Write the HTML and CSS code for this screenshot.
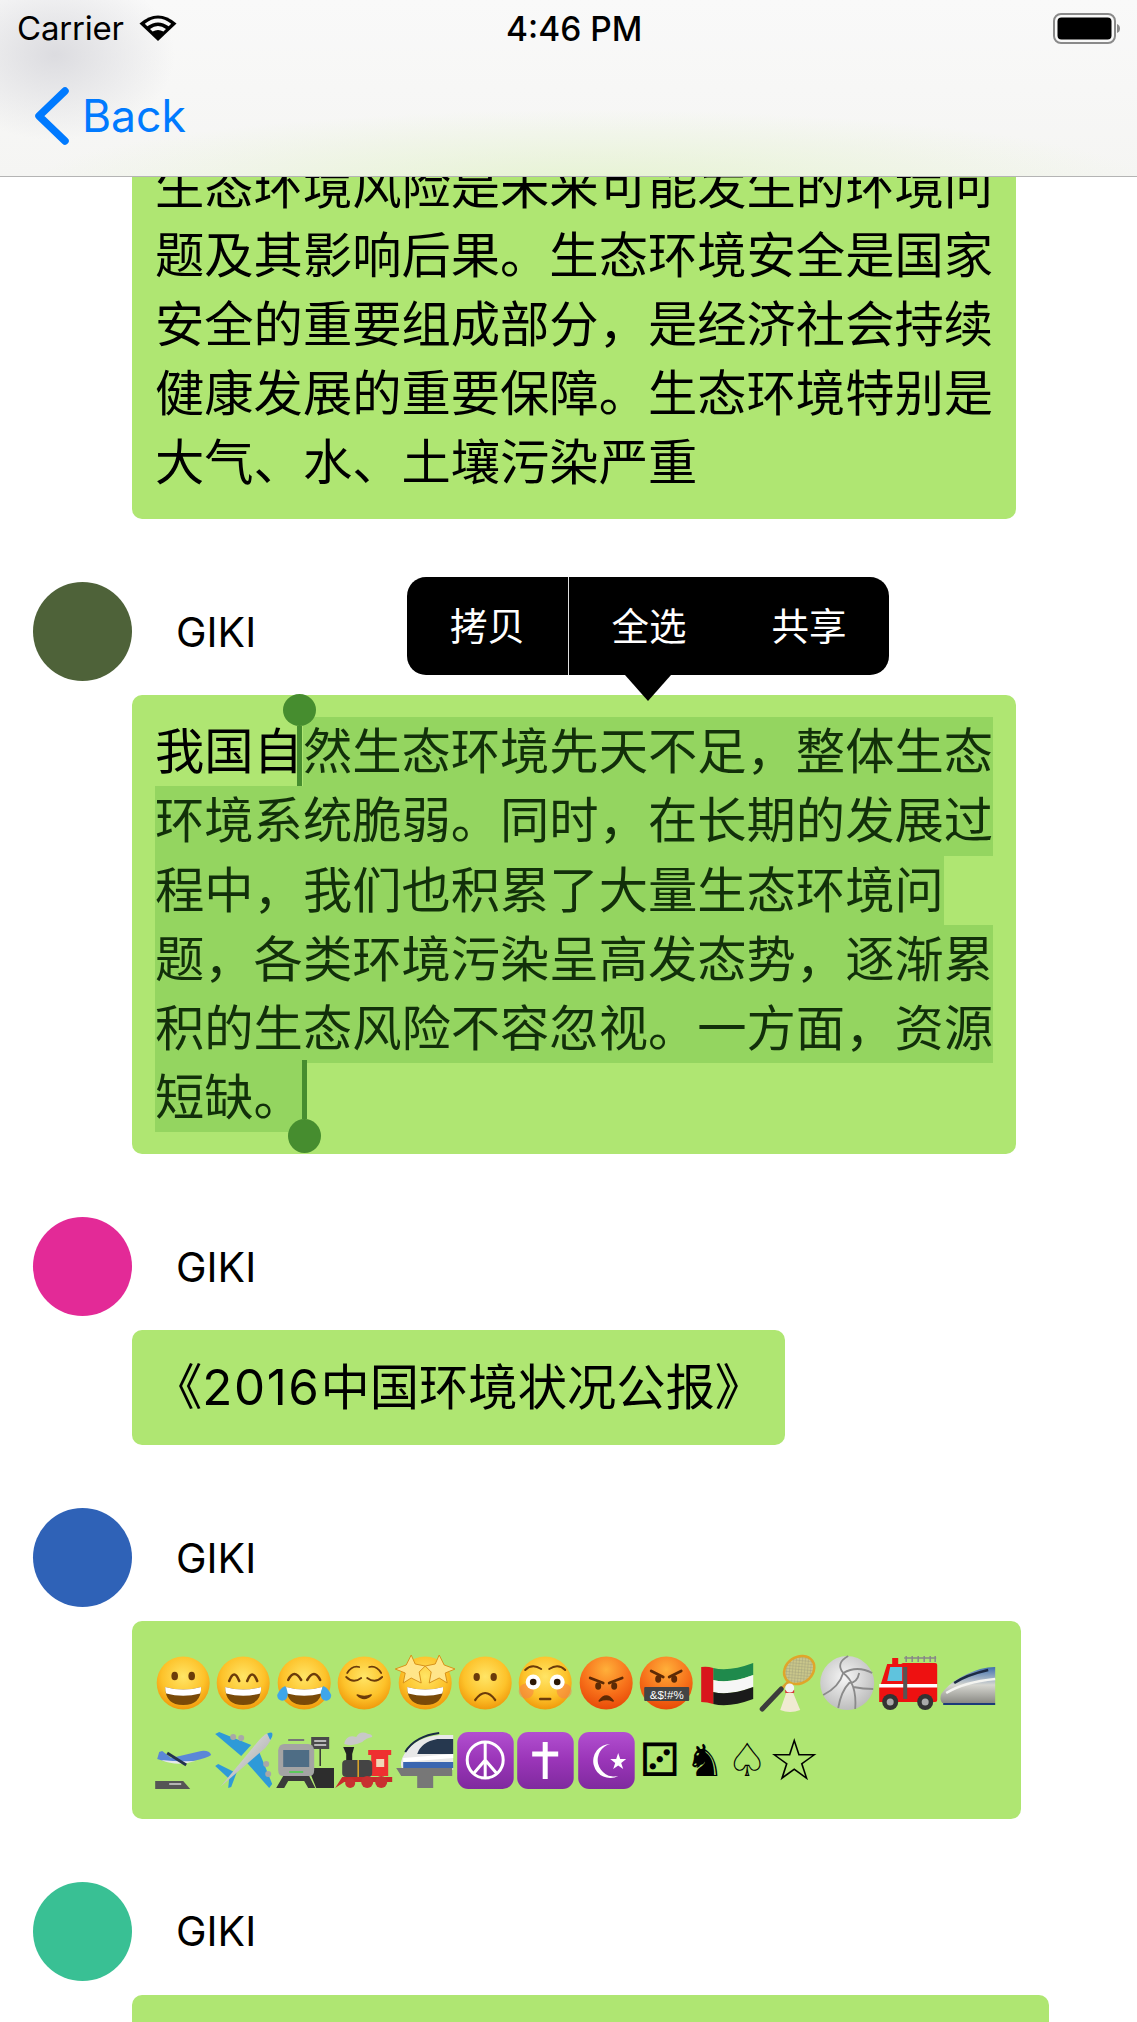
FILE: index.html
```html
<!DOCTYPE html>
<html lang="zh">
<head>
<meta charset="utf-8">
<title>Chat</title>
<link rel="stylesheet" href="styles.css">
</head>
<body>
<svg class="defs" aria-hidden="true">
  <defs>
    <radialGradient id="fy" cx="50%" cy="38%" r="62%"><stop offset="0" stop-color="#ffe566"/><stop offset=".65" stop-color="#fdc22a"/><stop offset="1" stop-color="#f09a0c"/></radialGradient>
    <radialGradient id="fo" cx="50%" cy="25%" r="75%"><stop offset="0" stop-color="#ffb03a"/><stop offset=".6" stop-color="#f7701a"/><stop offset="1" stop-color="#e84a08"/></radialGradient>
    <radialGradient id="vb" cx="45%" cy="40%" r="65%"><stop offset="0" stop-color="#f6f6f6"/><stop offset="1" stop-color="#b9b9b9"/></radialGradient>
    <linearGradient id="pu" x1="0" y1="0" x2="0" y2="1"><stop offset="0" stop-color="#b24fd0"/><stop offset=".5" stop-color="#9a35b8"/><stop offset="1" stop-color="#7f2a9e"/></linearGradient>
    <linearGradient id="tr" x1="0" y1="0" x2="0" y2="1"><stop offset="0" stop-color="#3f6fae"/><stop offset=".5" stop-color="#d6d6d0"/><stop offset="1" stop-color="#8a8a85"/></linearGradient>
    <linearGradient id="pl" x1="0" y1="0" x2="1" y2="1"><stop offset="0" stop-color="#f2f2f2"/><stop offset="1" stop-color="#9c9c9c"/></linearGradient>
    <pattern id="mesh" width="3" height="3" patternUnits="userSpaceOnUse" patternTransform="rotate(40)"><rect width="3" height="3" fill="#c9c68a"/><path d="M0 0H3M0 0V3" stroke="#9c9a78" stroke-width=".8"/></pattern>
    <symbol id="grin-mouth" viewBox="0 0 60 60"><path d="M12 34Q30 39 48 34Q48 52 30 52Q12 52 12 34Z" fill="#7a4a08"/><path d="M12 34Q30 39 48 34Q48 38 47 40.500Q30 45 13 40.500Q12 38 12 34Z" fill="#fff"/></symbol>
  </defs>
</svg>

<main class="list">
  <section class="msg">
    <div class="who"><div class="avatar a0"></div><span class="name">GIKI</span></div>
    <div class="bubble w1">
      <div class="line">生态环境风险是未来可能发生的环境问</div>
      <div class="line">题及其影响后果。生态环境安全是国家</div>
      <div class="line">安全的重要组成部分，是经济社会持续</div>
      <div class="line">健康发展的重要保障。生态环境特别是</div>
      <div class="line">大气、水、土壤污染严重</div>
    </div>
  </section>

  <section class="msg">
    <div class="who"><div class="avatar a1"></div><span class="name">GIKI</span></div>
    <div class="bubble w1">
      <div class="line">我国自<span class="sel">然生态环境先天不足，整体生态</span></div>
      <div class="line"><span class="sel">环境系统脆弱。同时，在长期的发展过</span></div>
      <div class="line"><span class="sel">程中，我们也积累了大量生态环境问</span></div>
      <div class="line"><span class="sel">题，各类环境污染呈高发态势，逐渐累</span></div>
      <div class="line"><span class="sel">积的生态风险不容忽视。一方面，资源</span></div>
      <div class="line"><span class="sel">短缺。</span></div>
      <div class="handle start"><i class="knob"></i><i class="stem"></i></div>
      <div class="handle end"><i class="stem"></i><i class="knob"></i></div>
      <div class="menu"><span class="mi first">拷贝</span><span class="mi">全选</span><span class="mi">共享</span></div>
    </div>
  </section>

  <section class="msg">
    <div class="who"><div class="avatar a2"></div><span class="name">GIKI</span></div>
    <div class="bubble w3"><div class="line">《<span class="num">2016</span>中国环境状况公报》</div></div>
  </section>

  <section class="msg">
    <div class="who"><div class="avatar a3"></div><span class="name">GIKI</span></div>
    <div class="bubble w4">
      <div class="emrow">
        <!-- grinning -->
        <svg class="em" viewBox="0 0 60 60"><circle cx="30" cy="30" r="26.500" fill="url(#fy)"/><ellipse cx="21.500" cy="23" rx="3.300" ry="4.300" fill="#6b3b0a"/><ellipse cx="38.500" cy="23" rx="3.300" ry="4.300" fill="#6b3b0a"/><use href="#grin-mouth"/></svg>
        <!-- beaming -->
        <svg class="em" viewBox="0 0 60 60"><circle cx="30" cy="30" r="26.500" fill="url(#fy)"/><path d="M16 28Q21 15 26 28M34 28Q39 15 44 28" fill="none" stroke="#6b3b0a" stroke-width="2.500" stroke-linecap="round"/><use href="#grin-mouth"/></svg>
        <!-- tears of joy -->
        <svg class="em" viewBox="0 0 60 60"><circle cx="30" cy="30" r="26.500" fill="url(#fy)"/><path d="M14 27Q20 15 27 27M33 27Q40 15 46 27" fill="none" stroke="#6b3b0a" stroke-width="2.500" stroke-linecap="round"/><use href="#grin-mouth"/><path d="M3 42C5 37 8 34 11 33C13 37 15 42 12 46C9 49 3 48 3 42Z" fill="#3fa6ea"/><path d="M57 42C55 37 52 34 49 33C47 37 45 42 48 46C51 49 57 48 57 42Z" fill="#3fa6ea"/></svg>
        <!-- relieved -->
        <svg class="em" viewBox="0 0 60 60"><circle cx="30" cy="30" r="26.500" fill="url(#fy)"/><path d="M12 24Q19 31 27 25M33 25Q41 31 48 24M13 20Q18 12 25 14M35 14Q42 12 47 20" fill="none" stroke="#6b3b0a" stroke-width="1.800" stroke-linecap="round"/><path d="M23 42Q30 49 37 42Q30 45 23 42Z" fill="#6b3b0a" stroke="#6b3b0a" stroke-width="1.500" stroke-linejoin="round"/></svg>
        <!-- star struck -->
        <svg class="em" viewBox="0 0 60 60"><circle cx="30" cy="30" r="26.500" fill="url(#fy)"/><use href="#grin-mouth"/><path d="M16 2L20 11L30 13L24 19L26 30L16 25L8 30L10 20L0 16L11 12Z" fill="#ffe58a" stroke="#d8921a" stroke-width="1"/><path d="M44 2L49 12L60 16L50 20L52 30L44 25L34 30L36 19L30 13L40 11Z" fill="#ffe58a" stroke="#d8921a" stroke-width="1"/></svg>
        <!-- frowning -->
        <svg class="em" viewBox="0 0 60 60"><circle cx="30" cy="30" r="26.500" fill="url(#fy)"/><ellipse cx="21.500" cy="24" rx="3.200" ry="4" fill="#6b3b0a"/><ellipse cx="38.500" cy="24" rx="3.200" ry="4" fill="#6b3b0a"/><path d="M20 47Q30 33 40 47" fill="none" stroke="#6b3b0a" stroke-width="2.200" stroke-linecap="round"/></svg>
        <!-- flushed -->
        <svg class="em" viewBox="0 0 60 60"><circle cx="30" cy="30" r="26.500" fill="url(#fy)"/><circle cx="11" cy="38" r="7.500" fill="#f6824a" opacity=".55"/><circle cx="49" cy="38" r="7.500" fill="#f6824a" opacity=".55"/><circle cx="18" cy="29" r="7.500" fill="#fff"/><circle cx="42" cy="29" r="7.500" fill="#fff"/><circle cx="18" cy="29" r="3.300" fill="#2c1806"/><circle cx="42" cy="29" r="3.300" fill="#2c1806"/><path d="M10 17Q17 10 26 16M34 16Q43 10 50 17" fill="none" stroke="#6b3b0a" stroke-width="2" stroke-linecap="round"/><path d="M25 46H35" stroke="#6b3b0a" stroke-width="2.500" stroke-linecap="round"/></svg>
        <!-- angry -->
        <svg class="em" viewBox="0 0 60 60"><circle cx="30" cy="30" r="26.500" fill="url(#fo)"/><path d="M14 25L27 30M46 25L33 30" stroke="#5d2a05" stroke-width="2.800" stroke-linecap="round"/><ellipse cx="22" cy="33" rx="3" ry="3.800" fill="#5d2a05"/><ellipse cx="38" cy="33" rx="3" ry="3.800" fill="#5d2a05"/><path d="M23 48Q30 38 37 48Q30 45 23 48Z" fill="#5d2a05" stroke="#5d2a05" stroke-width="1.500" stroke-linejoin="round"/></svg>
        <!-- cursing -->
        <svg class="em" viewBox="0 0 60 60"><circle cx="30" cy="30" r="26.500" fill="url(#fo)"/><path d="M15 18L27 24M45 18L33 24" stroke="#5d2a05" stroke-width="2.800" stroke-linecap="round"/><ellipse cx="22" cy="26" rx="3" ry="3.800" fill="#5d2a05"/><ellipse cx="38" cy="26" rx="3" ry="3.800" fill="#5d2a05"/><rect x="8" y="34" width="45" height="14" rx="1" fill="#444"/><text class="curse" x="30.500" y="45.500" text-anchor="middle">&amp;$!#%</text></svg>
        <!-- UAE flag -->
        <svg class="em" viewBox="0 0 60 60"><path d="M16 15Q32 19 56 10V22Q32 31 16 27Z" fill="#1f8a4c"/><path d="M16 27Q32 31 56 22V34Q32 43 16 39Z" fill="#f6f6f6"/><path d="M16 39Q32 43 56 34V46Q32 55 16 51Z" fill="#1a1a1a"/><path d="M4 14Q10 13 16 15V51Q10 49 4 49Z" fill="#d9161c"/></svg>
        <!-- badminton -->
        <svg class="em" viewBox="0 0 60 60"><ellipse cx="42" cy="17" rx="16" ry="13" transform="rotate(-35 42 17)" fill="url(#mesh)" stroke="#e0a52a" stroke-width="2.500"/><path d="M31 29L24 36" stroke="#d8a030" stroke-width="3"/><path d="M24 36L5 56" stroke="#3c3c3c" stroke-width="5" stroke-linecap="round"/><path d="M23 57L29 40H36L43 57Q33 61 23 57Z" fill="#f0ead2"/><path d="M28 40H37V37H28Z" fill="#d83a3a"/><circle cx="32.500" cy="35" r="4.500" fill="#f2f2f2"/></svg>
        <!-- volleyball -->
        <svg class="em" viewBox="0 0 60 60"><circle cx="30" cy="30" r="27" fill="url(#vb)"/><g fill="none" stroke="#8a8a8a" stroke-width="1.800"><path d="M26 20Q18 10 31 3M26 20Q40 12 55 20M26 20Q22 34 6 42"/><path d="M26 20Q40 30 38 56M42 20Q40 30 32 30Q24 38 21 55M36 34Q46 36 56 36"/></g></svg>
        <!-- fire engine -->
        <svg class="em" viewBox="0 0 60 60"><path d="M26 5H58M28 3V9M34 3V9M40 3V9M46 3V9M52 3V9M57 3V9" stroke="#888" stroke-width="1.500" fill="none"/><rect x="23" y="10" width="36" height="39" rx="2" fill="#ee1111"/><path d="M3 30L9 11H25V49H1V35Z" fill="#ee1111"/><path d="M9 28L12 14H24V28Z" fill="#5fc3dd"/><rect x="14" y="5" width="6" height="6" fill="#e11"/><rect x="1" y="31" width="58" height="3.500" fill="#fff"/><rect x="25" y="14" width="4" height="32" fill="#555"/><circle cx="12" cy="49" r="8" fill="#333"/><circle cx="12" cy="49" r="3.500" fill="#aaa"/><circle cx="47" cy="49" r="8" fill="#333"/><circle cx="47" cy="49" r="3.500" fill="#aaa"/></svg>
        <!-- bullet train -->
        <svg class="em" viewBox="0 0 60 60"><path d="M57 14V50H4Q1 46 3 41Q14 25 42 16Q50 14 57 14Z" fill="url(#tr)"/><path d="M8 40Q26 29 57 26" stroke="#f4f4f0" stroke-width="2.500" fill="none"/><path d="M16 30Q28 22 50 17" stroke="#1c2a44" stroke-width="2.500" fill="none"/><rect x="5" y="50" width="52" height="2" fill="#1c3a7a"/></svg>
      </div>
      <div class="emrow">
        <!-- departure -->
        <svg class="em" viewBox="0 0 60 60"><path d="M4 29Q20 35 40 31Q54 28 58 25Q56 20 48 21L18 28L9 21L6 22Z" fill="#5b87d8"/><path d="M8 30Q24 37 42 31Q26 32 8 30Z" fill="#e8e8e8"/><path d="M14 23L33 35" stroke="#24324e" stroke-width="2.800"/><path d="M2 51H30L37 59H2Z" fill="#555"/><path d="M16 54H28" stroke="#ccc" stroke-width="1.600"/></svg>
        <!-- airplane -->
        <svg class="em" viewBox="0 0 60 60"><path d="M2 4L6 2L38 15L28 26Z" fill="#2e9ad8"/><path d="M56 58L59 54L46 22L33 32Z" fill="#2e9ad8"/><path d="M2 36L5 34L21 42L15 48Z" fill="#2e9ad8"/><path d="M15 58L18 57L24 41L16 48Z" fill="#2e9ad8"/><circle cx="20" cy="7" r="3" fill="#a8a8a8"/><circle cx="28" cy="8" r="3" fill="#a8a8a8"/><circle cx="53" cy="34" r="3" fill="#a8a8a8"/><circle cx="55" cy="44" r="3" fill="#a8a8a8"/><path d="M7 57L46 10Q54 1 59 3Q60 9 52 18Z" fill="url(#pl)"/><path d="M54 3.500Q58 2 59 3Q60 6 57 10Z" fill="#2e9ad8"/></svg>
        <!-- station -->
        <svg class="em" viewBox="0 0 60 60"><rect x="37" y="7" width="18" height="12" fill="#4a4a4a"/><path d="M40 11H52M40 15H52" stroke="#ddd" stroke-width="1.500"/><path d="M46 19V36" stroke="#333" stroke-width="1.500"/><path d="M34 38H60V58H42Z" fill="#2d2d2d"/><path d="M10 14H34Q39 14 40 20V40Q40 46 35 46H9Q4 46 4 40V20Q5 14 10 14Z" fill="#a4a4a4"/><path d="M14 10H30" stroke="#777" stroke-width="2"/><rect x="9" y="20" width="26" height="17" fill="#4e6d85"/><rect x="15" y="41" width="14" height="2" fill="#5cc85c"/><path d="M2 58L9 46H35L41 58H34L30 51H14L10 58Z" fill="#3a3a3a"/></svg>
        <!-- locomotive -->
        <svg class="em" viewBox="0 0 60 60"><path d="M10 14Q12 4 22 7Q26 0 34 4Q38 4 38 7Q32 8 28 12Q18 17 10 14Z" fill="#c8c8c8"/><path d="M9 17H20L18 24V31H12V24Z" fill="#222"/><rect x="34" y="20" width="23" height="5" fill="#ee3030"/><rect x="37" y="25" width="17" height="21" fill="#ee3030"/><rect x="42" y="29" width="8" height="8" fill="#f0d8b8"/><rect x="8" y="30" width="30" height="17" rx="4" fill="#444"/><path d="M24 30V47" stroke="#e0a82a" stroke-width="1.500"/><path d="M1 58L8 47H58V52H10Z" fill="#c82a2a"/><circle cx="16" cy="53" r="5" fill="#c83030"/><circle cx="33" cy="52" r="6" fill="#c83030"/><circle cx="47" cy="52" r="6" fill="#c83030"/></svg>
        <!-- monorail -->
        <svg class="em" viewBox="0 0 60 60"><path d="M58 5V40H8Q4 36 7 28Q16 8 44 5Z" fill="#e8e8e8"/><path d="M22 24Q26 12 42 9H58V24Z" fill="#26384f"/><path d="M8 28L58 24V28L8 32Z" fill="#fff"/><path d="M8 32H58V38H8Z" fill="#3a66b0"/><path d="M10 22Q20 6 44 3" stroke="#1a2a44" stroke-width="2" fill="none"/><path d="M1 38H57V46H38V58H22V46H6Z" fill="#777"/></svg>
        <!-- peace -->
        <svg class="em" viewBox="0 0 60 60"><rect x="2" y="2" width="56.500" height="57" rx="11" fill="url(#pu)"/><g fill="none" stroke="#fff" stroke-width="3"><circle cx="30" cy="30" r="18"/><path d="M30 12V48M30 30L18 44M30 30L42 44"/></g></svg>
        <!-- cross -->
        <svg class="em" viewBox="0 0 60 60"><rect x="2" y="2" width="56.500" height="57" rx="11" fill="url(#pu)"/><path d="M30 12V49M17 24H43" stroke="#fff" stroke-width="5"/></svg>
        <!-- crescent -->
        <svg class="em" viewBox="0 0 60 60"><rect x="2" y="2" width="56.500" height="57" rx="11" fill="url(#pu)"/><path d="M34 14A17 17 0 1 0 42 46A15 15 0 1 1 34 14Z" fill="#fff"/><path d="M42 23L44 29L50 29L45 33L47 39L42 35.500L37 39L39 33L34 29L40 29Z" fill="#fff"/></svg>
        <span class="gl g1">⚂</span><span class="gl g2">♞</span><span class="gl g3">♤</span><span class="gl g4">☆</span>
      </div>
    </div>
  </section>

  <section class="msg">
    <div class="who"><div class="avatar a4"></div><span class="name">GIKI</span></div>
    <div class="bubble w5"><div class="line">&nbsp;</div></div>
  </section>
</main>

<header class="nav">
  <div class="status">
    <div class="carrier"><span>Carrier</span>
      <svg class="wifi" viewBox="0 0 38 28"><path d="M19 27L0.500 9.500Q19 -6.500 37.500 9.500Z" fill="#000"/><path d="M5.800 9.800Q19 -1 32.200 9.800L29.700 12.300Q19 4.500 8.300 12.300Z" fill="#f7f7f7"/><path d="M11 15Q19 8.800 27 15L24.400 17.600Q19 14.500 13.600 17.600Z" fill="#f7f7f7"/></svg>
    </div>
    <span class="time">4:46 PM</span>
    <svg class="battery" viewBox="0 0 67 31"><rect x="1" y="1" width="61" height="29" rx="7" fill="none" stroke="#8a8a8a" stroke-width="2"/><rect x="4.500" y="4.500" width="54" height="22" rx="4" fill="#000"/><path d="M64 11Q67 12 67 15.500Q67 19 64 20Z" fill="#8a8a8a"/></svg>
  </div>
  <a class="back"><svg class="chev" viewBox="0 0 36 58"><path d="M31 4L5 29L31 54" fill="none" stroke="#007aff" stroke-width="7.500" stroke-linecap="round" stroke-linejoin="round"/></svg><span>Back</span></a>
</header>
</body>
</html>
```
FILE: styles.css
```css
* { box-sizing: border-box; }
html, body { margin: 0; padding: 0; background: #fff; }
body {
  width: 1137px;
  height: 2022px;
  overflow: hidden;
  position: relative;
  font-family: Inter, "Noto Sans CJK SC", sans-serif;
  color: #000;
}
.defs { position: absolute; width: 0; height: 0; }

.list { padding-top: 16.500px; display: flex; flex-direction: column; gap: 63px; }
.msg { display: flex; flex-direction: column; gap: 14px; padding-left: 33px; }
.who { display: flex; align-items: center; gap: 44px; }
.avatar { width: 99px; height: 99px; border-radius: 50%; flex: none; }
.a0 { background: #5a5a68; }
.a1 { background: #4e6239; }
.a2 { background: #e32a97; }
.a3 { background: #2f62b7; }
.a4 { background: #39c094; }
.name { font-size: 41px; line-height: 50px; }

.bubble {
  position: relative;
  margin-left: 99px;
  background: #afe672;
  border-radius: 10px;
  padding: 22px 23px 21.800px;
}
.w1 { width: 884px; }
.w3 { width: 653px; padding-top: 23px; padding-bottom: 23px; padding-left: 21px; }
.w4 { width: 889px; padding: 23.500px 0 20px 21px; }
.w5 { width: 917px; }

.line { height: 69.200px; font-size: 49.300px; line-height: 69.200px; white-space: nowrap; }
.sel { display: inline-block; height: 69.200px; background: #94d560; color: #12300a; vertical-align: top; }
.num { letter-spacing: 1.600px; }

.handle { position: absolute; display: flex; flex-direction: column; align-items: center; width: 33px; }
.handle .knob { display: block; width: 33px; height: 32px; border-radius: 50%; background: #468d2f; flex: none; }
.handle .stem { display: block; width: 5px; background: #468d2f; flex: 1; }
.start { left: 151px; top: -1px; height: 92px; }
.end { left: 156px; top: 365px; height: 93px; }
.end .knob { height: 34px; }

.menu {
  position: absolute;
  left: 275px;
  top: -118px;
  width: 482px;
  height: 98px;
  background: #000;
  border-radius: 19px;
  display: flex;
}
.menu::after {
  content: "";
  position: absolute;
  left: 218px;
  top: 98px;
  border-style: solid;
  border-width: 26px 23px 0;
  border-color: #000 transparent transparent;
}
.mi {
  flex: 1;
  display: flex;
  align-items: center;
  justify-content: center;
  padding-bottom: 6px;
  color: #fff;
  font-size: 37.500px;
  font-weight: 400;
}
.first { flex: none; width: 162px; border-right: 1px solid #e0e0e0; }

.emrow { display: flex; align-items: center; height: 77px; }
.em { width: 60.400px; height: 60px; flex: none; }
.gl { font-family: "DejaVu Sans", sans-serif; flex: none; line-height: 77px; color: #000; }
.g1 { font-size: 46px; margin-left: 3.500px; }
.g2 { font-size: 44px; margin-left: 5.300px; }
.g3 { font-size: 46px; margin-left: 2.200px; }
.g4 { font-size: 58px; margin-left: 0.500px; }
.curse { font-family: "Liberation Sans", sans-serif; font-size: 11.500px; fill: #fff; }

.nav {
  position: absolute;
  left: 0;
  top: 0;
  width: 1137px;
  height: 177px;
  background:
    radial-gradient(ellipse 120px 85px at 55px 55px, #dcdce0 0%, rgba(220, 220, 224, 0) 100%),
    radial-gradient(ellipse 560px 75px at 590px 185px, #e6f3d2 0%, rgba(230, 243, 210, 0) 100%),
    linear-gradient(#f9f9f9, #f5f5f3);
  border-bottom: 1px solid #b4b4b4;
}
.status {
  height: 56px;
  padding: 0 17px 0 17px;
  display: flex;
  align-items: center;
  justify-content: space-between;
  position: relative;
  font-size: 33px;
}
.carrier { display: flex; align-items: center; gap: 15px; letter-spacing: -0.200px; }
.wifi { width: 38px; height: 28px; }
.time { position: absolute; left: 506px; top: 10px; line-height: 38px; font-weight: 500; font-size: 33.500px; }
.battery { width: 67px; height: 31px; }
.back { display: flex; align-items: center; gap: 12px; padding: 31px 0 0 34px; color: #007aff; font-size: 44.500px; line-height: 56px; }
.chev { width: 36px; height: 58px; }
```
